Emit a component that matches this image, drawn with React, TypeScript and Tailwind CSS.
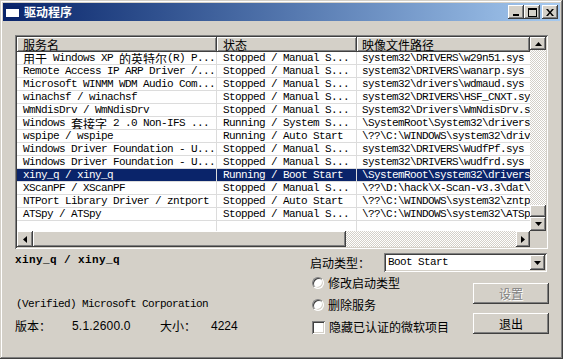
import React from "react";

const rows = [
  ["用于 Windows XP 的英特尔(R) P...", "Stopped / Manual S...", "system32\\DRIVERS\\w29n51.sys"],
  ["Remote Access IP ARP Driver /...", "Stopped / Manual S...", "system32\\DRIVERS\\wanarp.sys"],
  ["Microsoft WINMM WDM Audio Com...", "Stopped / Manual S...", "system32\\drivers\\wdmaud.sys"],
  ["winachsf / winachsf", "Stopped / Manual S...", "system32\\DRIVERS\\HSF_CNXT.sys"],
  ["WmNdisDrv / WmNdisDrv", "Stopped / Manual S...", "System32\\Drivers\\WmNdisDrv.sys"],
  ["Windows 套接字 2 .0 Non-IFS ...", "Running / System S...", "\\SystemRoot\\System32\\drivers\\ws2ifsl.sys"],
  ["wspipe / wspipe", "Running / Auto Start", "\\??\\C:\\WINDOWS\\system32\\drivers\\wspipe.sys"],
  ["Windows Driver Foundation - U...", "Stopped / Manual S...", "system32\\DRIVERS\\WudfPf.sys"],
  ["Windows Driver Foundation - U...", "Stopped / Manual S...", "system32\\DRIVERS\\wudfrd.sys"],
  ["xiny_q / xiny_q", "Running / Boot Start", "\\SystemRoot\\system32\\drivers\\xiny_q.sys"],
  ["XScanPF / XScanPF", "Stopped / Manual S...", "\\??\\D:\\hack\\X-Scan-v3.3\\dat\\XScanPF.sys"],
  ["NTPort Library Driver / zntport", "Stopped / Auto Start", "\\??\\C:\\WINDOWS\\system32\\zntport.sys"],
  ["ATSpy / ATSpy", "Stopped / Manual S...", "\\??\\C:\\WINDOWS\\system32\\ATSpy.sys"],
];

const raised =
  "shadow-[inset_-1px_-1px_#404040,inset_1px_1px_#ffffff,inset_-2px_-2px_#808080,inset_2px_2px_#d4d0c8]";
const sunken =
  "shadow-[inset_1px_1px_#808080,inset_-1px_-1px_#ffffff,inset_2px_2px_#404040,inset_-2px_-2px_#d4d0c8]";
const dither =
  "bg-[image:repeating-conic-gradient(#ffffff_0_25%,#d4d0c8_0_50%)] [background-size:2px_2px]";

const CJK = /([\u3000-\u9fff\uff00-\uffef]+)/;

// ascii in a narrow mono, CJK runs at full 12px width
function Mixed({ text }: { text: string }) {
  const parts = text.split(CJK);
  return (
    <>
      {parts.map((p, i) =>
        CJK.test(p) ? (
          <span
            key={i}
            className="inline-block align-top h-[13px] leading-[13px] font-['Noto_Sans_CJK_SC'] text-[12px] tracking-normal"
          >
            {p}
          </span>
        ) : (
          <span key={i}>{p}</span>
        )
      )}
    </>
  );
}

function Arrow({ dir }: { dir: "up" | "down" | "left" | "right" }) {
  const pts = {
    up: "3.5,0 7,4 0,4",
    down: "0,0 7,0 3.5,4",
    left: "4,0 4,7 0,3.5",
    right: "0,0 4,3.5 0,7",
  }[dir];
  const vert = dir === "up" || dir === "down";
  return (
    <svg width={vert ? 7 : 4} height={vert ? 4 : 7}>
      <polygon points={pts} fill="#000" />
    </svg>
  );
}

function ScrollBtn({ dir, className }: { dir: "up" | "down" | "left" | "right"; className: string }) {
  return (
    <div className={`flex items-center justify-center bg-[#d4d0c8] ${raised} ${className}`}>
      <Arrow dir={dir} />
    </div>
  );
}

function CaptionBtn({ children, className = "" }: { children: React.ReactNode; className?: string }) {
  return (
    <div className={`w-[16px] h-[14px] bg-[#d4d0c8] flex items-center justify-center ${raised} ${className}`}>
      {children}
    </div>
  );
}

function Radio({ label }: { label: string }) {
  return (
    <div className="h-[22px] flex items-center gap-[4px] pl-[2px]">
      <div className="w-[12px] h-[12px] rounded-full bg-white border border-t-[#808080] border-l-[#808080] border-b-[#ffffff] border-r-[#ffffff] shadow-[inset_1px_1px_#404040,inset_-1px_-1px_#d4d0c8]" />
      <span>{label}</span>
    </div>
  );
}

export default function App() {
  return (
    <div
      className={`w-[563px] h-[359px] bg-[#d4d0c8] p-[3px] flex flex-col text-black text-[12px] font-['Noto_Sans_CJK_SC',sans-serif] shadow-[inset_-1px_-1px_#404040,inset_1px_1px_#d4d0c8,inset_-2px_-2px_#808080,inset_2px_2px_#ffffff]`}
    >
      {/* title bar */}
      <div className="h-[18px] flex items-center bg-gradient-to-r from-[#0a246a] to-[#a6caf0] pl-[2px] pr-[2px]">
        <div className="w-[15px] h-[12px] bg-white border-t-[3px] border-[#0a246a] border-x border-b border-x-[#0a246a] border-b-[#0a246a]" />
        <span className="ml-[4px] text-white font-bold text-[12px] leading-[18px]">驱动程序</span>
        <div className="ml-auto flex items-center">
          <CaptionBtn>
            <div className="w-[6px] h-[2px] bg-black mt-[6px]" />
          </CaptionBtn>
          <CaptionBtn>
            <div className="w-[9px] h-[9px] border border-black border-t-2" />
          </CaptionBtn>
          <CaptionBtn className="ml-[2px]">
            <svg width="8" height="7">
              <path d="M0 0h2l2 2.5L6 0h2L5 3.5 8 7H6L4 4.5 2 7H0l3-3.5z" fill="#000" />
            </svg>
          </CaptionBtn>
        </div>
      </div>

      {/* list view */}
      <div className={`ml-[12px] mt-[14px] w-[533px] h-[214px] p-[2px] bg-white ${sunken} flex flex-col`}>
        <div className="flex h-[194px]">
          <div className="w-[513px] flex flex-col overflow-hidden font-['Liberation_Mono',monospace] text-[11px] tracking-[-0.6px]">
            <div className="flex h-[15px] shrink-0 font-['Noto_Sans_CJK_SC'] text-[12px] tracking-normal leading-[15px]">
              {[
                ["服务名", "w-[200px] pl-[6px]"],
                ["状态", "w-[140px] pl-[6px]"],
                ["映像文件路径", "w-[173px] pl-[5px]"],
              ].map(([t, w]) => (
                <div
                  key={t}
                  className={`${w} shrink-0 bg-[#d4d0c8] shadow-[inset_-1px_-1px_#404040,inset_1px_1px_#ffffff,inset_-2px_-2px_#808080]`}
                >
                  {t}
                </div>
              ))}
            </div>
            {rows.map((r, i) => {
              const sel = i === 9;
              return (
                <div
                  key={i}
                  className={`flex h-[13px] shrink-0 leading-[13px] whitespace-pre ${
                    sel ? "bg-[#0a246a] text-white" : ""
                  }`}
                >
                  <div className="w-[200px] h-[13px] shrink-0 pl-[6px] overflow-hidden border-r border-b border-[#dcdcdc]">
                    <Mixed text={r[0]} />
                  </div>
                  <div className="w-[140px] h-[13px] shrink-0 pl-[6px] overflow-hidden border-r border-b border-[#dcdcdc]">
                    {r[1]}
                  </div>
                  <div className="w-[173px] h-[13px] shrink-0 pl-[5px] overflow-hidden border-b border-[#dcdcdc]">
                    {r[2]}
                  </div>
                </div>
              );
            })}
            <div className="flex flex-1">
              <div className="w-[200px] border-r border-[#dcdcdc]" />
              <div className="w-[140px] border-r border-[#dcdcdc]" />
            </div>
          </div>
          <div className="w-[16px] flex flex-col">
            <ScrollBtn dir="up" className="h-[13px]" />
            <div className={`flex-1 ${dither}`} />
            <div className={`h-[12px] bg-[#d4d0c8] ${raised}`} />
            <ScrollBtn dir="down" className="h-[14px]" />
          </div>
        </div>
        <div className="flex h-[16px]">
          <ScrollBtn dir="left" className="w-[16px]" />
          <div className={`w-[313px] bg-[#d4d0c8] ${raised}`} />
          <div className={`flex-1 ${dither}`} />
          <ScrollBtn dir="right" className="w-[14px]" />
          <div className="w-[16px] bg-[#d4d0c8]" />
        </div>
      </div>

      {/* details + controls */}
      <div className="flex pl-[12px]">
        <div className="w-[295px] flex flex-col">
          <div className="mt-[5px] h-[13px] leading-[13px] font-['Liberation_Mono',monospace] font-bold text-[11px] tracking-[0.4px]">
            xiny_q / xiny_q
          </div>
          <div className="mt-[31px] h-[13px] leading-[13px] pl-[1px] font-['Liberation_Mono',monospace] text-[11px] tracking-[-0.6px]">
            (Verified) Microsoft Corporation
          </div>
          <div className="mt-[8px] h-[14px] leading-[14px] flex">
            <span className="w-[57px]">版本：</span>
            <span className="w-[88px] font-['Liberation_Sans',sans-serif] tracking-[0.2px]">5.1.2600.0</span>
            <span className="w-[51px]">大小：</span>
            <span className="font-['Liberation_Sans',sans-serif]">4224</span>
          </div>
        </div>

        <div className="flex flex-col w-[239px]">
          <div className="mt-[4px] flex items-center h-[19px]">
            <span className="w-[74px]">启动类型：</span>
            <div className={`w-[163px] h-[19px] bg-white ${sunken} flex items-center pl-[4px] pr-[2px]`}>
              <span className="font-['Liberation_Mono',monospace] text-[11px] tracking-[-0.6px]">Boot Start</span>
              <ScrollBtn dir="down" className="ml-auto w-[15px] h-[15px]" />
            </div>
          </div>
          <div className="flex">
            <div className="w-[163px] flex flex-col">
              <Radio label="修改启动类型" />
              <Radio label="删除服务" />
              <div className="h-[22px] flex items-center gap-[4px] pl-[2px]">
                <div className={`w-[13px] h-[13px] bg-white ${sunken}`} />
                <span>隐藏已认证的微软项目</span>
              </div>
            </div>
            <div className="flex flex-col pt-[11px] gap-[9px]">
              <div
                className={`w-[76px] h-[21px] bg-[#d4d0c8] ${raised} flex items-center justify-center text-[#808080] [text-shadow:1px_1px_#ffffff]`}
              >
                设置
              </div>
              <div className={`w-[76px] h-[21px] bg-[#d4d0c8] ${raised} flex items-center justify-center`}>
                退出
              </div>
            </div>
          </div>
        </div>
      </div>
    </div>
  );
}
